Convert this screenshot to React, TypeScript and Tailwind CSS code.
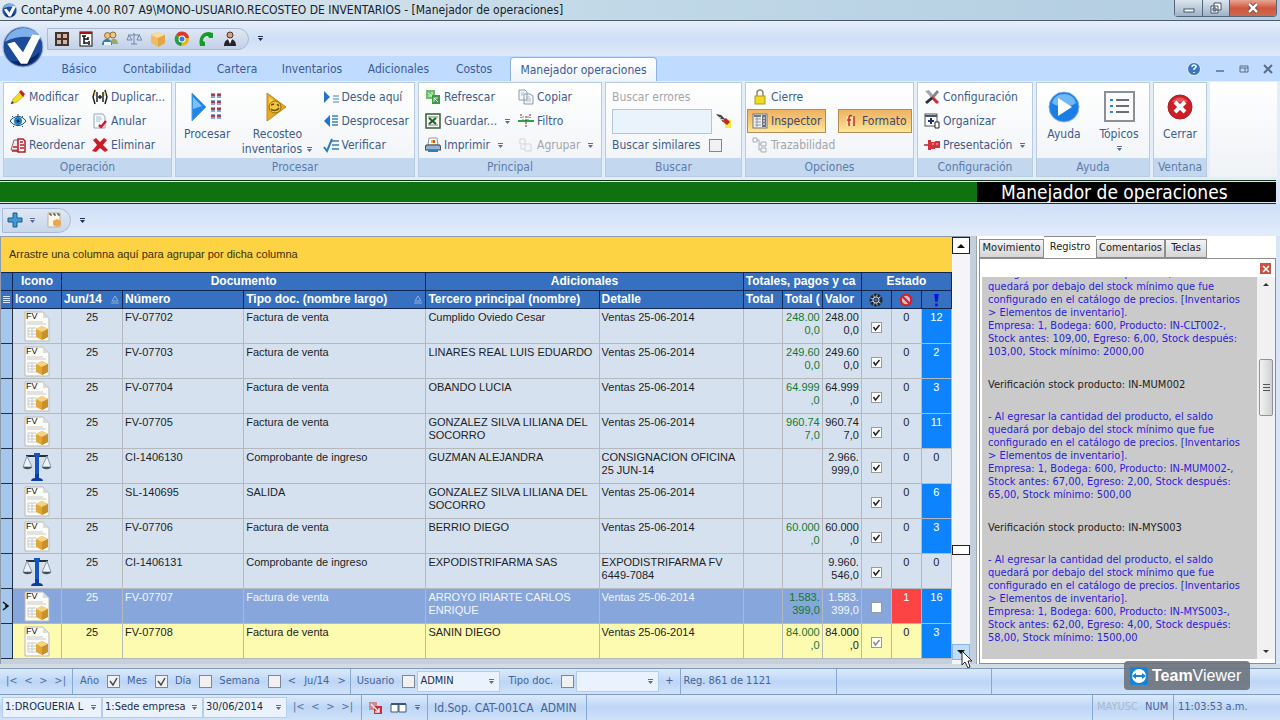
import type { ReactNode } from "react";

const sans = "font-['DejaVu_Sans_Condensed','DejaVu_Sans',sans-serif]";
const arial = "font-['Liberation_Sans',Arial,sans-serif]";

function Svg({ size = "size-4", box = 16, children }: { size?: string; box?: number; children: ReactNode }) {
  return (
    <svg className={`${size} shrink-0`} viewBox={`0 0 ${box} ${box}`} fill="none" aria-hidden="true">
      {children}
    </svg>
  );
}

function Caret({ className = "text-[#5b6f94]" }: { className?: string }) {
  return (
    <svg className={`h-[5px] w-[7px] shrink-0 ${className}`} viewBox="0 0 7 5" aria-hidden="true">
      <path d="M1 0h5v1H1zM1 2h5L3.500 5z" fill="currentColor" />
    </svg>
  );
}

const icons = {
  grid: (
    <Svg>
      <rect x="1" y="1" width="14" height="14" fill="#3c3532" />
      <path d="M3 3h4v4H3zM9 3h4v4H9zM3 9h4v4H3zM9 9h4v4H9z" fill="#d9b09a" />
    </Svg>
  ),
  tree: (
    <Svg>
      <rect x="2" y="1" width="12" height="14" fill="#fff" stroke="#111" />
      <path d="M2 1h12v2H2z" fill="#a11" />
      <path d="M4 5h4M6 5v8M6 8h4M6 12h4M10 6v3M11 10v4" stroke="#111" strokeWidth="1.500" />
    </Svg>
  ),
  people: (
    <Svg>
      <circle cx="5.500" cy="4.500" r="3" fill="#e9c27c" stroke="#8d7039" />
      <circle cx="11" cy="4" r="3" fill="#edc988" stroke="#8d7039" />
      <path d="M8 13c0-7 8-7 8 0z" fill="#9aa96c" />
      <path d="M0 14c0-8 10-8 10 0z" fill="#2f7fb8" />
      <path d="M2 14h7v-3H2z" fill="#e8f3fa" />
    </Svg>
  ),
  scaleSmall: (
    <Svg>
      <path d="M2 4h12M8 2v11M5 13h6M3 4l-2 5h5zM13 4l-2 5h5z" stroke="#6f86a8" />
    </Svg>
  ),
  box: (
    <Svg>
      <path d="M1 4l7-3 7 3v8l-7 4-7-4z" fill="#f0bb62" />
      <path d="M1 4l7 3 7-3-7-3z" fill="#f9dca4" />
      <path d="M8 7v9l7-4V4z" fill="#e2a548" />
    </Svg>
  ),
  chrome: (
    <Svg>
      <circle cx="8" cy="8" r="7" fill="#e8b621" />
      <path d="M2 4a7 7 0 0 1 13 3H8z" fill="#d93a2b" />
      <path d="M2 4a7 7 0 0 0 5 11l2-6z" fill="#2f9a46" />
      <circle cx="8" cy="8" r="3.500" fill="#fff" />
      <circle cx="8" cy="8" r="2.500" fill="#3a7bd5" />
    </Svg>
  ),
  phone: (
    <Svg>
      <path d="M2 15C0 7 4 1 11 1l4 1v5h-4l-1-2C7 5 5 7 5 10l2 1v4z" fill="#199b2c" />
    </Svg>
  ),
  person: (
    <Svg>
      <circle cx="8" cy="4" r="3" fill="#d9a184" stroke="#4a332b" />
      <path d="M2 15c0-4 2-7 6-7s6 3 6 7z" fill="#24252c" />
      <path d="M6 8h4l-2 5z" fill="#fff" />
    </Svg>
  ),
  pencil: (
    <Svg>
      <path d="M1 15l2-5 7-7 4 4-7 6z" fill="#f1dd22" stroke="#9b931f" strokeWidth=".5" />
      <path d="M9 3l2-2 4 4-2 3z" fill="#cf1f2b" />
      <path d="M1 15l1-3 2 2z" fill="#333" />
    </Svg>
  ),
  eye: (
    <Svg>
      <path d="M0 8c4-6 12-6 16 0-4 6-12 6-16 0z" fill="#e9f3fb" stroke="#27415c" />
      <circle cx="8" cy="8" r="4" fill="#1c82c8" />
      <circle cx="8" cy="8" r="1.500" fill="#0b2136" />
      <path d="M2 3l1 1M13 3l-1 1M8 1v2M3 14l1-1M13 14l-1-1" stroke="#27415c" />
    </Svg>
  ),
  reorder: (
    <Svg>
      <path d="M1 13L4 3h4v10z" fill="#f3e9ea" stroke="#8d5f66" />
      <path d="M8 2h5l2 2v11H8z" fill="#fff" stroke="#b71c26" strokeWidth="1.500" />
      <path d="M10 5h3M10 8h4M10 11h4M2 14h6M3 10h4" stroke="#b71c26" strokeWidth="1.500" />
    </Svg>
  ),
  duplicate: (
    <Svg>
      <path d="M3 1L1 8l2 7M5 3v10M13 1l2 7-2 7M11 3v10" stroke="#222" strokeWidth="1.500" />
      <path d="M6 8h4M8 6v4" stroke="#222" strokeWidth="1.500" />
      <path d="M3 3v4M13 3v4" stroke="#e3c51c" />
    </Svg>
  ),
  annul: (
    <Svg>
      <path d="M2 1h9l2 3v11H2z" fill="#f7fafc" stroke="#9aa5b1" />
      <path d="M4 4h5M4 6h6M4 8h4" stroke="#a9bfca" />
      <path d="M7 12l2 2 5-6" stroke="#cf1f2b" strokeWidth="2.500" />
    </Svg>
  ),
  remove: (
    <Svg>
      <path d="M1 3l3-2 4 4 4-4 3 2-4 5 5 5-3 2-5-4-4 4-4-1 5-6z" fill="#cb1d27" />
    </Svg>
  ),
  process: (
    <Svg size="size-8" box={32}>
      <path d="M1 2l14 14L1 30z" fill="#1f86ee" stroke="#5b9be0" />
      <path d="M2 6l9 9-9 3z" fill="#7cc0ff" />
      {[2, 9, 16, 23].map((y) => (
        <g key={y}>
          <path d={`M20 ${y}h4v5h-4zM26 ${y}h4v5h-4z`} fill="#8aa4d2" />
          <path d={`M20 ${y + 2}h4M26 ${y + 2}h4`} stroke="#b5374c" strokeWidth="2" />
        </g>
      ))}
    </Svg>
  ),
  recost: (
    <Svg size="size-8" box={32}>
      <path d="M6 2l19 14L6 30z" fill="#eba922" stroke="#b98a24" />
      <path d="M8 6l12 9-12 2z" fill="#f8cf5c" />
      <circle cx="14" cy="16" r="6" fill="#f5c73c" stroke="#94690d" />
      <path d="M10 14l3-1M16 13l2 2M10 18c2 2 6 2 8-1" stroke="#6a4c0a" strokeWidth="1.500" />
    </Svg>
  ),
  fromHere: (
    <Svg>
      <path d="M1 2l6 6-6 6z" fill="#2273cf" />
      <path d="M10 7h6M10 10h6M10 13h6" stroke="#3a84c4" />
    </Svg>
  ),
  unprocess: (
    <Svg>
      <path d="M7 2L1 8l6 6z" fill="#2273cf" />
      <path d="M9 3h6M9 6h6M9 9h6M9 12h6" stroke="#3a84c4" strokeWidth="1.500" />
    </Svg>
  ),
  verify: (
    <Svg>
      <path d="M1 10l3 4L9 2" stroke="#2480c5" strokeWidth="2" />
      <path d="M9 4h7M9 8h7M9 12h7" stroke="#3a84a4" strokeWidth="1.500" />
    </Svg>
  ),
  refresh: (
    <Svg>
      <path d="M1 1h9v9H1z" fill="#6cbd70" />
      <path d="M3 4l4 3M7 3v4H3" stroke="#e3f6e1" />
      <path d="M7 6h8v9H7z" fill="#3b9a48" />
      <path d="M9 9l4 4M9 13V9h4" stroke="#e3f6e1" />
    </Svg>
  ),
  excel: (
    <Svg>
      <rect x="1" y="1" width="14" height="14" fill="#f2f8ef" stroke="#39593c" strokeWidth="1.500" />
      <path d="M3 4h10M3 12h10" stroke="#6c8b6b" />
      <path d="M4 5l7 6M11 5l-7 6" stroke="#1f5a2b" strokeWidth="2" />
    </Svg>
  ),
  printer: (
    <Svg>
      <path d="M4 1h8l1 7H3z" fill="#fff" stroke="#8a96a5" />
      <path d="M6 3h2v3H6z" fill="#e9b33d" />
      <path d="M8 3h2v3H8z" fill="#d84a32" />
      <path d="M1 8h14l1 5H0z" fill="#9fb0c4" stroke="#33435c" />
      <path d="M3 14h10" stroke="#2680c4" strokeWidth="2" />
    </Svg>
  ),
  copy: (
    <Svg>
      <path d="M1 1h6l2 2v8H1zM6 5h6l3 2v8H6z" fill="#f5f8fb" stroke="#8d99a8" />
      <path d="M8 8h4M8 10h5M8 12h5M3 4h3M3 6h2" stroke="#b1bbc8" />
    </Svg>
  ),
  filter: (
    <Svg>
      <path d="M0 8h16" stroke="#2da344" strokeWidth="2" />
      <path d="M3 1v4M12 1v4M8 3v12" stroke="#5d3333" strokeDasharray="2 1" />
      <path d="M5 3v4M10 3v4" stroke="#b66" strokeDasharray="2 1" />
    </Svg>
  ),
  group: (
    <Svg>
      <path d="M2 2h5v5H2zM7 7h6v7H7zM3 8v4h4" stroke="#d3d6db" />
    </Svg>
  ),
  brush: (
    <Svg>
      <path d="M9 7h6v8H9z" fill="#f7ee38" />
      <path d="M0 1l5 1 5 5-3 2z" fill="#4a3e3e" />
      <path d="M6 8l4-3 4 4-3 3z" fill="#c3272b" />
      <path d="M2 4l3 1M4 6l4 1" stroke="#dedede" />
    </Svg>
  ),
  lock: (
    <Svg>
      <path d="M5 8V4a3 3 0 0 1 6 0v4" stroke="#8d8d6a" strokeWidth="1.500" />
      <rect x="3" y="7" width="10" height="8" fill="#f0dc1f" stroke="#a89b24" />
    </Svg>
  ),
  inspector: (
    <Svg>
      <rect x="1" y="1" width="14" height="14" fill="#f0f0f0" stroke="#777" />
      <path d="M2 2h7v2H2z" fill="#6f7b8b" />
      <path d="M3 6h6M3 9h6M3 12h6M5 4v10" stroke="#8e99a7" />
      <path d="M10 2h4v12h-4z" fill="#6b7380" />
      <path d="M11 5h2M11 8h2M11 11h2" stroke="#fff" />
    </Svg>
  ),
  format: (
    <Svg>
      <path d="M3 3h9v10H3z" fill="#f6d9a4" />
      <path d="M9 3c-2-1-3 0-3 2v8M4 7h4M11 3v10" stroke="#c2301c" strokeWidth="1.500" />
    </Svg>
  ),
  trace: (
    <Svg>
      <path d="M1 1h4v4H1zM9 5h5v4H9zM9 11h5v4H9zM5 3h2v10h2M7 7h2" stroke="#a9adb4" />
    </Svg>
  ),
  tools: (
    <Svg>
      <path d="M1 2l4-1 9 11-2 3L4 5z" fill="#a2a8b0" />
      <path d="M13 1l2 2-5 6-2-2z" fill="#7e858e" />
      <path d="M8 7l7 6-2 2-6-6z" fill="#c92b31" />
      <path d="M7 8l2 2-6 5-2-2z" fill="#2e3338" />
    </Svg>
  ),
  organize: (
    <Svg>
      <rect x="1" y="1" width="12" height="12" fill="#fff" stroke="#4b5563" />
      <path d="M1 3h12" stroke="#4b5563" strokeWidth="2" />
      <path d="M7 5v6M4 8h6" stroke="#1c2f80" strokeWidth="2" />
      <path d="M11 9h4v6h-4z" fill="#fff" stroke="#222" />
    </Svg>
  ),
  present: (
    <Svg>
      <path d="M0 8h5" stroke="#9a6a70" strokeWidth="2" />
      <path d="M4 3h3v10H4zM7 5h4v7H7zM11 4h5v7h-5z" fill="#d6303b" />
      <path d="M8 7h2M12 7h2" stroke="#f4c4c7" />
    </Svg>
  ),
  help: (
    <Svg size="size-8" box={32}>
      <circle cx="16" cy="16" r="15" fill="#1c7ee4" stroke="#7fb3e8" />
      <path d="M4 12c3-12 21-12 24 0-7 5-17 5-24 0z" fill="#6fb9f7" />
      <path d="M10 7l14 9-14 9z" fill="#fff" />
    </Svg>
  ),
  topics: (
    <Svg size="size-8" box={32}>
      <rect x="2" y="1" width="29" height="29" fill="#fbfbfb" stroke="#8c8f96" strokeWidth="2" />
      <path d="M7 9h3M7 15h3M7 21h3" stroke="#2f86c8" strokeWidth="2" />
      <path d="M13 9h13M13 15h13M13 21h13" stroke="#3c4048" strokeWidth="1.500" />
    </Svg>
  ),
  close: (
    <Svg size="size-8" box={32}>
      <circle cx="16" cy="16" r="12" fill="#cf1f26" stroke="#9d2227" />
      <path d="M8 11c4-6 12-6 16 0z" fill="#e5575b" />
      <path d="M11 11l10 10M21 11L11 21" stroke="#fff" strokeWidth="4" />
    </Svg>
  ),
};

type IconName = keyof typeof icons;

type ActionProps = { icon: IconName; label: string; caret?: boolean; disabled?: boolean; active?: boolean };

function Action({ icon, label, caret, disabled, active }: ActionProps) {
  return (
    <button
      type="button"
      disabled={disabled}
      className={`flex h-6 items-center gap-[3px] px-1 whitespace-nowrap ${
        active
          ? "border border-[#b08d55] bg-linear-to-b from-[#eeb363] via-[#f8c877] to-[#fde79b] text-[#3d4a68]"
          : "border border-transparent"
      } ${disabled ? "text-[#a3a6ab]" : ""}`}
    >
      {icons[icon]}
      {label}
      {caret && (
        <span className="ml-1">
          <Caret />
        </span>
      )}
    </button>
  );
}

function BigAction({ icon, lines, width, caret }: { icon: IconName; lines: string[]; width: string; caret?: boolean }) {
  return (
    <button type="button" className={`flex flex-col items-center pt-2 ${width}`}>
      {icons[icon]}
      <span className="mt-1 flex flex-col items-center leading-[15px]">
        {lines.map((line, i) => (
          <span key={line} className="flex items-center gap-1 whitespace-nowrap">
            {line}
            {caret && i > 0 && <Caret />}
          </span>
        ))}
        {caret && lines.length === 1 && (
          <span className="mt-1">
            <Caret />
          </span>
        )}
      </span>
    </button>
  );
}

function Group({ title, width, children }: { title: string; width: string; children: ReactNode }) {
  return (
    <section className={`flex shrink-0 flex-col border border-[#b9cbe2] bg-linear-to-b from-white to-[#eff2f6] ${width}`}>
      <div className="flex h-[75px] items-start">{children}</div>
      <h2 className="h-[18px] bg-[#c3d8ee] text-center leading-[18px] text-[#5e7bab]">{title}</h2>
    </section>
  );
}

function Column({ width = "", children }: { width?: string; children: ReactNode }) {
  return <div className={`flex shrink-0 flex-col items-start pt-[2px] pl-px ${width}`}>{children}</div>;
}

const tabs = [
  { label: "Básico", width: "w-[60px]" },
  { label: "Contabilidad", width: "w-[96px]" },
  { label: "Cartera", width: "w-[64px]" },
  { label: "Inventarios", width: "w-[86px]" },
  { label: "Adicionales", width: "w-[87px]" },
  { label: "Costos", width: "w-[64px]" },
];

const quickIcons: IconName[] = ["grid", "tree", "people", "scaleSmall", "box", "chrome", "phone", "person"];

function Logo({ size }: { size: string }) {
  return (
    <Svg size={size} box={40}>
      <circle cx="20" cy="20" r="19" fill="#1d4b9c" stroke="#9db4d4" />
      <path d="M3 15C8-2 32-2 37 13c-9-4-24-4-34 2z" fill="#7fb0ea" />
      <path d="M36 25A17 17 0 0 1 8 33c10 2 20-1 28-8z" fill="#0c2660" />
      <path d="M5 17l7-2 8 10 9-17 8 1-13 27h-6z" fill="#fff" />
    </Svg>
  );
}

function TitleBar() {
  return (
    <header className="flex h-[21px] items-center border-b border-[#4b5b6a] bg-linear-to-r from-[#dfe9ef] via-[#c0d8e7] to-[#b2cce1] pl-[2px]">
      <Logo size="size-[15px]" />
      <h1 className="ml-1 text-[12px] whitespace-nowrap text-[#16202b]">
        ContaPyme 4.00 R07 A9\MONO-USUARIO.RECOSTEO DE INVENTARIOS - [Manejador de operaciones]
      </h1>
      <div className="mr-[3px] ml-auto flex h-[17px] self-start rounded-b border border-t-0 border-[#54657a] text-white">
        <button type="button" aria-label="Minimizar" className="flex w-7 items-center justify-center border-r border-[#54657a] bg-linear-to-b from-[#dbe5ee] to-[#9fb3c7]">
          <Svg size="size-3" box={12}>
            <rect x="1" y="7" width="10" height="3" fill="#fff" stroke="#465468" />
          </Svg>
        </button>
        <button type="button" aria-label="Restaurar" className="flex w-[27px] items-center justify-center border-r border-[#54657a] bg-linear-to-b from-[#dbe5ee] to-[#9fb3c7]">
          <Svg size="size-3" box={12}>
            <path d="M4 1h7v7H4zM1 4h7v7H1z" fill="#fff" stroke="#465468" />
            <path d="M3 6h3v3H3z" stroke="#465468" />
          </Svg>
        </button>
        <button type="button" aria-label="Cerrar" className="flex w-[46px] items-center justify-center bg-linear-to-b from-[#e6a696] via-[#d0553d] to-[#cc6a50]">
          <Svg size="size-3" box={12}>
            <path d="M2 2l8 8M10 2l-8 8" stroke="#5a3a3a" strokeWidth="4" />
            <path d="M2 2l8 8M10 2l-8 8" stroke="#fff" strokeWidth="2.500" />
          </Svg>
        </button>
      </div>
    </header>
  );
}

function QuickAccess() {
  return (
    <div className="relative flex h-[35px] items-center bg-linear-to-b from-[#e6eefb] via-[#cfdff6] to-[#dfe9f9] pl-[47px]">
      <div className="absolute top-[5px] left-[2px] z-10">
        <Logo size="size-[42px]" />
      </div>
      <div className="flex h-[22px] items-center gap-2 rounded-r-full border border-[#a9bbd6] bg-linear-to-b from-[#dfe7f3] to-[#c3d1e7] pr-2.5 pl-1.5">
        {quickIcons.map((name) => (
          <button type="button" key={name} aria-label={name}>
            {icons[name]}
          </button>
        ))}
      </div>
      <span className="ml-2">
        <Caret className="text-[#1f2f4d]" />
      </span>
    </div>
  );
}

function Tabs() {
  return (
    <nav className="flex h-[25px] items-end bg-[#bfdbff] pl-[49px] text-[12px] text-[#3d5c96]">
      {tabs.map((tab) => (
        <button type="button" key={tab.label} className={`h-6 ${tab.width}`}>
          {tab.label}
        </button>
      ))}
      <button type="button" className="ml-1 h-6 w-[147px] rounded-t-sm border border-b-0 border-[#8fb1de] bg-linear-to-b from-white to-[#eef4fc]">
        Manejador operaciones
      </button>
      <div className="mr-1.5 ml-auto flex h-6 items-center gap-3 text-[#5c6d88]">
        <button type="button" aria-label="Ayuda">
          <Svg>
            <circle cx="8" cy="8" r="6.500" fill="#3b77c0" stroke="#e6f0fb" />
            <path d="M6 6c0-3 5-2 4 0l-2 2v1M8 11v1" stroke="#fff" strokeWidth="1.500" />
          </Svg>
        </button>
        <button type="button" aria-label="Minimizar">
          <Svg size="size-3" box={12}>
            <path d="M2 8h8" stroke="currentColor" strokeWidth="1.500" />
          </Svg>
        </button>
        <button type="button" aria-label="Restaurar">
          <Svg size="size-3" box={12}>
            <path d="M2 3h8v6H2zM2 5h8M7 5v4" stroke="currentColor" />
          </Svg>
        </button>
        <button type="button" aria-label="Cerrar">
          <Svg size="size-3" box={12}>
            <path d="M2 2l8 8M10 2l-8 8" stroke="currentColor" strokeWidth="2" />
          </Svg>
        </button>
      </div>
    </nav>
  );
}

function Ribbon() {
  return (
    <div className="flex h-[99px] gap-[3px] bg-[#e4eefa] px-[3px] pt-px pb-[3px] text-[12px] text-[#3d5c8d]">
      <Group title="Operación" width="w-[169px]">
        <Column width="w-[82px]">
          <Action icon="pencil" label="Modificar" />
          <Action icon="eye" label="Visualizar" />
          <Action icon="reorder" label="Reordenar" />
        </Column>
        <Column>
          <Action icon="duplicate" label="Duplicar..." />
          <Action icon="annul" label="Anular" />
          <Action icon="remove" label="Eliminar" />
        </Column>
      </Group>
      <Group title="Procesar" width="w-[240px]">
        <BigAction icon="process" lines={["Procesar"]} width="w-[64px]" />
        <BigAction icon="recost" lines={["Recosteo", "inventarios"]} width="w-[80px]" caret />
        <Column>
          <Action icon="fromHere" label="Desde aquí" />
          <Action icon="unprocess" label="Desprocesar" />
          <Action icon="verify" label="Verificar" />
        </Column>
      </Group>
      <Group title="Principal" width="w-[184px]">
        <Column width="w-[93px]">
          <Action icon="refresh" label="Refrescar" />
          <Action icon="excel" label="Guardar..." caret />
          <Action icon="printer" label="Imprimir" caret />
        </Column>
        <Column>
          <Action icon="copy" label="Copiar" />
          <Action icon="filter" label="Filtro" />
          <Action icon="group" label="Agrupar" caret disabled />
        </Column>
      </Group>
      <Group title="Buscar" width="w-[137px]">
        <div className="flex w-full flex-col px-1.5 pt-[2px]">
          <label htmlFor="errors" className="h-6 leading-6 text-[#a3a6ab]">
            Buscar errores
          </label>
          <div className="flex h-6 items-center gap-1">
            <input id="errors" className="h-[25px] w-[100px] border border-[#b4c4d9] bg-[#eaf2fb]" />
            {icons.brush}
          </div>
          <label className="flex h-6 items-center gap-2 whitespace-nowrap">
            Buscar similares
            <Check />
          </label>
        </div>
      </Group>
      <Group title="Opciones" width="w-[169px]">
        <Column width="w-[92px]">
          <Action icon="lock" label="Cierre" />
          <Action icon="inspector" label="Inspector" active />
          <Action icon="trace" label="Trazabilidad" disabled />
        </Column>
        <div className="pt-[26px]">
          <Action icon="format" label="Formato" active />
        </div>
      </Group>
      <Group title="Configuración" width="w-[116px]">
        <Column>
          <Action icon="tools" label="Configuración" />
          <Action icon="organize" label="Organizar" />
          <Action icon="present" label="Presentación" caret />
        </Column>
      </Group>
      <Group title="Ayuda" width="w-[114px]">
        <BigAction icon="help" lines={["Ayuda"]} width="w-[54px]" />
        <BigAction icon="topics" lines={["Tópicos"]} width="w-[56px]" caret />
      </Group>
      <Group title="Ventana" width="w-[54px]">
        <BigAction icon="close" lines={["Cerrar"]} width="w-[52px]" />
      </Group>
      <div className="flex-1 bg-linear-to-b from-white to-[#eff2f6]" />
    </div>
  );
}

// Must sit inside a <label>
function Check({ checked = false }: { checked?: boolean }) {
  return (
    <span className="relative flex size-[13px] shrink-0 items-center justify-center">
      <input type="checkbox" defaultChecked={checked} className="size-[13px] appearance-none border border-[#7d8896] bg-[#f1f1f1]" />
      {checked && (
        <svg className="pointer-events-none absolute size-[9px] text-[#3c4a63]" viewBox="0 0 9 9" fill="none">
          <path d="M1 4l3 4L8 1" stroke="currentColor" strokeWidth="1.500" />
        </svg>
      )}
    </span>
  );
}

function CheckMark({ checked, dim }: { checked: boolean; dim?: boolean }) {
  return (
    <label className="relative mx-auto flex size-[11px] items-center justify-center">
      <input type="checkbox" defaultChecked={checked} aria-label="Procesado" className="size-[11px] appearance-none border border-[#9a9a9a] bg-white" />
      {checked && (
        <svg className={`pointer-events-none absolute size-[9px] ${dim ? "text-[#8c8c7a]" : "text-[#222]"}`} viewBox="0 0 9 9" fill="none">
          <path d="M1.500 4l2 3L7.500 2" stroke="currentColor" strokeWidth="1.500" />
        </svg>
      )}
    </label>
  );
}

type Row = {
  kind: "doc" | "scale";
  number: string;
  type: string;
  name: string;
  detail: string;
  paid: string[];
  value: string[];
  errors: number;
  warnings: number;
};

const sale = { kind: "doc" as const, type: "Factura de venta", detail: "Ventas 25-06-2014", errors: 0 };

const rows: Row[] = [
  { ...sale, number: "FV-07702", name: "Cumplido Oviedo Cesar", paid: ["248.00", "0,0"], value: ["248.00", "0,0"], warnings: 12 },
  { ...sale, number: "FV-07703", name: "LINARES REAL LUIS EDUARDO", paid: ["249.60", "0,0"], value: ["249.60", "0,0"], warnings: 2 },
  { ...sale, number: "FV-07704", name: "OBANDO LUCIA", paid: ["64.999", ",0"], value: ["64.999", ",0"], warnings: 3 },
  { ...sale, number: "FV-07705", name: "GONZALEZ SILVA LILIANA DEL SOCORRO", paid: ["960.74", "7,0"], value: ["960.74", "7,0"], warnings: 11 },
  { kind: "scale", number: "CI-1406130", type: "Comprobante de ingreso", name: "GUZMAN ALEJANDRA", detail: "CONSIGNACION OFICINA 25 JUN-14", paid: [], value: ["2.966.", "999,0"], errors: 0, warnings: 0 },
  { ...sale, number: "SL-140695", type: "SALIDA", name: "GONZALEZ SILVA LILIANA DEL SOCORRO", paid: [], value: [], warnings: 6 },
  { ...sale, number: "FV-07706", name: "BERRIO DIEGO", paid: ["60.000", ",0"], value: ["60.000", ",0"], warnings: 3 },
  { kind: "scale", number: "CI-1406131", type: "Comprobante de ingreso", name: "EXPODISTRIFARMA SAS", detail: "EXPODISTRIFARMA FV 6449-7084", paid: [], value: ["9.960.", "546,0"], errors: 0, warnings: 0 },
  { ...sale, number: "FV-07707", name: "ARROYO IRIARTE CARLOS ENRIQUE", paid: ["1.583.", "399,0"], value: ["1.583.", "399,0"], errors: 1, warnings: 16 },
  { ...sale, number: "FV-07708", name: "SANIN DIEGO", paid: ["84.000", ",0"], value: ["84.000", ",0"], warnings: 3 },
];

function DocIcon() {
  return (
    <svg className="mx-auto h-[31px] w-[26px]" viewBox="0 0 26 31" aria-label="FV">
      <path d="M1 1h18l6 6v23H1z" fill="#fbfbf8" stroke="#b9b9b0" />
      <path d="M19 1v6h6z" fill="#d9dcdc" />
      <text x="2" y="8" fontSize="9" fontFamily="Liberation Sans, Arial, sans-serif" fill="#111">
        FV
      </text>
      <path d="M3 11h16M3 13h19M4 17h8M4 20h8M4 23h8M4 26h8M4 17v9M8 17v9" stroke="#c8cbca" />
      <path d="M12 18l6-3 6 3v8l-6 3-6-3z" fill="#e0a83a" />
      <path d="M12 18l6 3 6-3-6-3z" fill="#f5d381" />
      <path d="M18 21v8l6-3v-8z" fill="#cb8f27" />
    </svg>
  );
}

function ScaleIcon() {
  return (
    <svg className="mx-auto h-[31px] w-[30px]" viewBox="0 0 30 31" fill="none" aria-label="CI">
      <path d="M4 5h22" stroke="#26303c" strokeWidth="2" />
      <path d="M5 5L1 16h9zM25 5l-5 11h9z" fill="#eef3f8" stroke="#8d98a6" />
      <path d="M1 16c1 3 8 3 9 0zM20 16c1 3 8 3 9 0z" fill="#46505c" />
      <path d="M12 2h6v3h-1v19h-4V5h-1z" fill="#1057c4" />
      <path d="M9 30c0-2 2-3 4-3v-4h4v4c2 0 4 1 4 3z" fill="#0b3fa0" />
    </svg>
  );
}

const columns = ["w-[12px]", "w-[49px]", "w-[61px]", "w-[121px]", "w-[182px]", "w-[173px]", "w-[144px]", "w-[39px]", "w-[40px]", "w-[39px]", "w-[30px]", "w-[30px]", "w-[30px]"];

const headers = ["Icono", "Jun/14", "Número", "Tipo doc. (nombre largo)", "Tercero principal (nombre)", "Detalle", "Total", "Total (", "Valor"];

const head = "overflow-hidden border-r border-b border-[#10254f] px-[2px] whitespace-nowrap";
const cell = "overflow-hidden border-r border-b border-[#b5b9bd] px-[2px] pt-[2px]";

function Grid() {
  return (
    <table className="w-full table-fixed border-separate border-spacing-0 text-left text-[11px] leading-[13px]">
      <colgroup>
        {columns.map((width, i) => (
          <col key={i} className={width} />
        ))}
      </colgroup>
      <thead className="bg-[#3670c0] text-[12px] text-white">
        <tr className="h-[18px] text-center">
          <th className={head} />
          <th className={head}>Icono</th>
          <th colSpan={3} className={head}>Documento</th>
          <th colSpan={2} className={head}>Adicionales</th>
          <th colSpan={3} className={`${head} text-left`}>Totales, pagos y ca</th>
          <th colSpan={3} className={head}>Estado</th>
        </tr>
        <tr className="h-[18px]">
          <th className={head}>
            <Svg size="size-[7px]" box={7}>
              <path d="M0 0h7v1H0zM0 2h7v1H0zM0 4h7v1H0zM0 6h7v1H0z" fill="#dce7f6" />
            </Svg>
          </th>
          {headers.map((label) => (
            <th key={label} className={head}>
              <span className="flex items-center justify-between">
                {label}
                {(label === "Jun/14" || label.startsWith("Tipo")) && (
                  <Svg size="size-2.5" box={10}>
                    <path d="M5 1l3 5H2zM1 8h8" stroke="#8fb0df" />
                  </Svg>
                )}
              </span>
            </th>
          ))}
          <th className={head} aria-label="Procesado">
            <Svg size="mx-auto size-4">
              <circle cx="8" cy="8" r="5" fill="#c9cdd2" stroke="#23272c" strokeWidth="3" strokeDasharray="2.500 1" />
              <circle cx="8" cy="8" r="2" fill="#3670c0" stroke="#23272c" />
            </Svg>
          </th>
          <th className={head} aria-label="Errores">
            <Svg size="mx-auto size-3.5">
              <circle cx="8" cy="8" r="6" fill="#d9bcc6" stroke="#d3202a" strokeWidth="2.500" />
              <path d="M4 4l8 8" stroke="#d3202a" strokeWidth="2.500" />
            </Svg>
          </th>
          <th className={head} aria-label="Advertencias">
            <Svg size="mx-auto size-3.5">
              <path d="M6 1h5l-1 9H7zM7 12h3v3H7z" fill="#0a12e0" />
            </Svg>
          </th>
        </tr>
      </thead>
      <tbody>
        {rows.map((row) => {
          const selected = row.number === "FV-07707";
          const last = row.number === "FV-07708";
          return (
            <tr
              key={row.number}
              className={`h-[35px] align-top ${selected ? "bg-[#87a6dc] text-[#f2f6fd]" : last ? "bg-[#fdfbb0] text-[#222]" : "bg-[#d6e1f0] text-[#1a1f26]"}`}
            >
              <td className="border-r border-b border-[#1f2d45] bg-[#a6c7ec] align-middle text-[#111]">
                {selected && (
                  <Svg size="size-2.5" box={10}>
                    <path d="M2 1l5 4-5 4M4 5h3" stroke="currentColor" strokeWidth="1.500" />
                  </Svg>
                )}
              </td>
              <td className={cell}>{row.kind === "doc" ? <DocIcon /> : <ScaleIcon />}</td>
              <td className={`${cell} text-center`}>25</td>
              <td className={cell}>{row.number}</td>
              <td className={cell}>{row.type}</td>
              <td className={cell}>{row.name}</td>
              <td className={cell}>{row.detail}</td>
              <td className={cell} />
              <td className={`${cell} text-right text-[#127a2e]`}>
                {row.paid.map((part) => <div key={part}>{part}</div>)}
              </td>
              <td className={`${cell} text-right`}>
                {row.value.map((part) => <div key={part}>{part}</div>)}
              </td>
              <td className={`${cell} align-middle`}>
                <CheckMark checked={!selected} dim={last} />
              </td>
              <td className={`${cell} text-center ${row.errors ? "bg-[#fd4444] text-white" : ""}`}>{row.errors}</td>
              <td className={`${cell} text-center ${row.warnings ? "bg-[#0d84fd] text-white" : ""}`}>{row.warnings}</td>
            </tr>
          );
        })}
      </tbody>
    </table>
  );
}

function GridScrollbar() {
  return (
    <div className="flex w-[18px] shrink-0 flex-col bg-[#f4f5f7]">
      <button type="button" aria-label="Subir" className="flex h-[17px] items-center justify-center border border-[#222] bg-white">
        <svg className="h-1 w-2" viewBox="0 0 8 4">
          <path d="M4 0l4 4H0z" fill="#111" />
        </svg>
      </button>
      <div className="flex flex-1 flex-col justify-end">
        <div className="mb-[89px] h-2.5 border border-[#222] bg-white" />
      </div>
      <button type="button" aria-label="Bajar" className="relative mb-1 flex h-4 items-center justify-center border border-[#8fb4da] bg-[#bcdcf8]">
        <svg className="h-1 w-2" viewBox="0 0 8 4">
          <path d="M4 4l4-4H0z" fill="#111" />
        </svg>
        <svg className="absolute top-[5px] left-2 h-[19px] w-[12px]" viewBox="0 0 12 19">
          <path d="M1 1v14l3-3 3 6 2-1-2-6h4z" fill="#fff" stroke="#222" />
        </svg>
      </button>
    </div>
  );
}

const log = [
  {
    title: "Verificación stock producto: IN-CLT002",
    body: `- Al egresar la cantidad del producto, el saldo
quedará por debajo del stock mínimo que fue
configurado en el catálogo de precios. [Inventarios
> Elementos de inventario].
Empresa: 1, Bodega: 600, Producto: IN-CLT002-,
Stock antes: 109,00, Egreso: 6,00, Stock después:
103,00, Stock mínimo: 2000,00`,
  },
  {
    title: "Verificación stock producto: IN-MUM002",
    body: `- Al egresar la cantidad del producto, el saldo
quedará por debajo del stock mínimo que fue
configurado en el catálogo de precios. [Inventarios
> Elementos de inventario].
Empresa: 1, Bodega: 600, Producto: IN-MUM002-,
Stock antes: 67,00, Egreso: 2,00, Stock después:
65,00, Stock mínimo: 500,00`,
  },
  {
    title: "Verificación stock producto: IN-MYS003",
    body: `- Al egresar la cantidad del producto, el saldo
quedará por debajo del stock mínimo que fue
configurado en el catálogo de precios. [Inventarios
> Elementos de inventario].
Empresa: 1, Bodega: 600, Producto: IN-MYS003-,
Stock antes: 62,00, Egreso: 4,00, Stock después:
58,00, Stock mínimo: 1500,00`,
  },
];

const tabStyle = "border border-[#8d8d8d] bg-linear-to-b from-[#f4f4f4] to-[#d5d5d5]";

function Inspector() {
  return (
    <aside className="flex w-[300px] shrink-0 flex-col border-l border-[#9aa4b2] bg-white pl-[2px]">
      <div className="flex h-[22px] items-end text-[11px] text-[#222]">
        <button type="button" className={`h-[19px] w-[65px] ${tabStyle}`}>Movimiento</button>
        <button type="button" className="h-[22px] w-[52px] border-t border-[#8d8d8d] bg-white">Registro</button>
        <button type="button" className={`h-[19px] w-[69px] ${tabStyle}`}>Comentarios</button>
        <button type="button" className={`h-[19px] w-[42px] ${tabStyle}`}>Teclas</button>
      </div>
      <div className="flex min-h-0 flex-1 flex-col border border-[#8d8d8d]">
        <button type="button" aria-label="Cerrar panel" className="mt-1 mr-1 mb-[3px] flex size-[11px] items-center justify-center self-end bg-[#c9523e]">
          <Svg size="size-2" box={8}>
            <path d="M1 1l6 6M7 1L1 7" stroke="#fff" strokeWidth="1.500" />
          </Svg>
        </button>
        <div className="mb-1 ml-[2px] flex h-0 flex-1">
          <div className="flex-1 overflow-hidden bg-[#cacaca] pl-1.5 text-[11px] leading-[13px]">
            <div className="-mt-2.5">
              {log.map((entry, i) => (
                <section key={entry.title}>
                  {i > 0 && <h3 className="pt-5 pb-[19px] text-[#222]">{entry.title}</h3>}
                  <p className="whitespace-pre text-[#2a20dc]">{entry.body}</p>
                </section>
              ))}
            </div>
          </div>
          <div className="flex w-[18px] flex-col items-center bg-[#f1f1f1] py-[6px]">
            <svg className="h-[3px] w-[6px]" viewBox="0 0 6 3">
              <path d="M3 0l3 3H0z" fill="#333" />
            </svg>
            <div className="mt-[73px] flex h-[57px] w-[14px] flex-col items-center justify-center gap-[2px] rounded-xs border border-[#8e9298] bg-linear-to-r from-[#f3f3f3] to-[#cfd0d3]">
              <span className="h-px w-[7px] bg-[#555]" />
              <span className="h-px w-[7px] bg-[#555]" />
              <span className="h-px w-[7px] bg-[#555]" />
            </div>
            <svg className="mt-auto h-[3px] w-[6px]" viewBox="0 0 6 3">
              <path d="M3 3l3-3H0z" fill="#333" />
            </svg>
          </div>
        </div>
      </div>
    </aside>
  );
}

function Nav() {
  return (
    <div className="flex w-[60px] items-center justify-between text-[#53719f]">
      <button type="button">|&lt;</button>
      <button type="button">&lt;</button>
      <button type="button">&gt;</button>
      <button type="button">&gt;|</button>
    </div>
  );
}

function Select({ label, value, width }: { label: string; value: string; width: string }) {
  return (
    <div className={`flex h-[21px] items-center border border-[#b3cdec] bg-[#eaf3fd] pr-1 pl-[2px] text-[#1d2c46] ${width}`}>
      <select aria-label={label} className="min-w-0 flex-1 appearance-none overflow-hidden">
        <option>{value}</option>
      </select>
      <Caret />
    </div>
  );
}

function Sep() {
  return <span className="w-px self-stretch bg-[#86a7d2]" />;
}

const bar = "flex h-[26px] items-center border-t border-[#7c9cc6] bg-linear-to-b from-[#dceafb] via-[#bdd6f6] to-[#d0e2f9] whitespace-nowrap";
const option = "flex items-center gap-2";

function StatusBars() {
  return (
    <footer className="relative text-[11px] text-[#46649a]">
      <div className={`${bar} pl-1.5`}>
        <Nav />
        <div className="ml-1.5 flex items-center gap-[7px] self-stretch">
          <Sep />
          <label className={option}>Año <Check checked /></label>
          <label className={option}>Mes <Check checked /></label>
          <label className={option}>Día <Check /></label>
          <label className={option}>Semana <Check /></label>
        </div>
        <div className="ml-[7px] flex w-[58px] items-center justify-between">
          <button type="button">&lt;</button>
          Ju/14
          <button type="button">&gt;</button>
        </div>
        <div className="ml-1 flex items-center gap-1.5 self-stretch">
          <Sep />
          <label className={option}>Usuario <Check /></label>
        </div>
        <Select label="Usuario" value="ADMIN" width="w-[83px] ml-[2px]" />
        <label className={`${option} ml-2`}>Tipo doc. <Check /></label>
        <Select label="Tipo de documento" value="" width="w-[83px] ml-[2px]" />
        <button type="button" className="px-1.5">+</button>
        <div className="flex flex-1 items-center self-stretch">
          <Sep />
          <span className="w-[155px] pl-[3px]">Reg. 861 de 1121</span>
          <Sep />
          <span className="w-[154px]" />
          <Sep />
        </div>
      </div>
      <div className={`${bar} pl-[2px]`}>
        <Select label="Empresa" value="1:DROGUERIA L" width="w-[100px]" />
        <Select label="Sede" value="1:Sede empresa" width="w-[101px]" />
        <Select label="Fecha" value="30/06/2014" width="w-[84px]" />
        <div className="ml-1.5">
          <Nav />
        </div>
        <div className="ml-2 flex items-center gap-1.5 self-stretch">
          <Sep />
          <button type="button" aria-label="Relacionar">
            <Svg size="size-4">
              <path d="M1 2h8v8H1z" fill="#c98a93" />
              <path d="M6 6h8v8H6z" fill="#c0313a" />
              <path d="M3 4l8 8M11 8v4H7" stroke="#f8e4e6" strokeWidth="1.500" />
            </Svg>
          </button>
          <button type="button" aria-label="Ventanas">
            <Svg size="size-[18px]" box={18}>
              <path d="M1 5h7v8H1zM9 5h7v8H9z" fill="#fff" stroke="#3d5673" />
              <path d="M1 5h15" stroke="#3d5673" strokeWidth="2" />
            </Svg>
          </button>
          <Caret />
          <Sep />
          <span className="w-[146px] text-[12px] whitespace-pre">Id.Sop. CAT-001CA  ADMIN</span>
          <Sep />
        </div>
        <div className="ml-auto flex items-center self-stretch">
          <Sep />
          <span className="w-[52px] pl-1 text-[#a9b8cc]">MAYUSC</span>
          <span className="w-[28px]">NUM</span>
          <Sep />
          <span className="w-[106px] pl-1">11:03:53 a.m.</span>
        </div>
      </div>
      <div className="absolute right-[30px] bottom-[30px] flex h-[29px] w-[126px] items-center gap-1 rounded-sm bg-[#6b727c]/90 pl-1.5 text-white">
        <Svg size="size-[18px]" box={18}>
          <rect width="18" height="18" rx="2" fill="#1483d8" />
          <circle cx="9" cy="9" r="7" fill="#fff" />
          <path d="M2 9l4-3v2h6V6l4 3-4 3v-2H6v2z" fill="#1483d8" />
        </Svg>
        <span className={`text-[16px] ${arial}`}>
          <b>Team</b>Viewer
        </span>
      </div>
    </footer>
  );
}

export default function App() {
  return (
    <div className={`flex min-h-screen flex-col overflow-hidden bg-[#d8e5f8] ${sans}`}>
      <TitleBar />
      <QuickAccess />
      <Tabs />
      <Ribbon />
      <div className="mr-1 border-y border-[#12351a]">
        <div className="flex h-[22px] border-y border-[#dfe9e4] bg-[#0d720f]">
          <div className="ml-auto w-[299px] bg-black pl-6 text-[19px] leading-5 whitespace-nowrap text-white">
            Manejador de operaciones
          </div>
        </div>
      </div>
      <div className="flex h-8 items-center bg-linear-to-b from-[#cfdff7] to-[#e2ecfb] pl-[2px]">
        <div className="flex h-[25px] items-center gap-1.5 rounded-r-full border border-[#a9bbd6] bg-linear-to-b from-[#dfe7f3] to-[#c9d7eb] pr-2 pl-1">
          <button type="button" aria-label="Nuevo">
            <Svg>
              <path d="M6 1h4v5h5v4h-5v5H6v-5H1V6h5z" fill="#3d9bd8" stroke="#1d5c8f" />
            </Svg>
          </button>
          <Caret />
          <button type="button" aria-label="Documento" className="ml-1">
            <Svg>
              <path d="M2 1h12v14H2z" fill="#fbf6ea" stroke="#b9b3a5" />
              <path d="M3 2h2v2M7 2h2v2M11 2h2v2" stroke="#333" />
              <path d="M7 9l4-2 4 2v4l-4 2-4-2z" fill="#e7a94e" />
            </Svg>
          </button>
        </div>
        <span className="ml-2">
          <Caret className="text-[#1f2f4d]" />
        </span>
      </div>
      <main className="mr-1 flex flex-1 bg-[#c6d0dd]">
        <div className={`flex min-w-0 flex-1 border-t border-l border-[#8f9bab] ${arial}`}>
          <div className="min-w-0 flex-1">
            <div className="flex h-9 items-center border-b border-[#10254f] bg-[#fed343] pl-2 text-[11px] text-[#3a2f0c]">
              Arrastre una columna aquí para agrupar por dicha columna
            </div>
            <Grid />
          </div>
          <GridScrollbar />
        </div>
        <div className="w-1.5 shrink-0 bg-[#c3cfdd]" />
        <Inspector />
      </main>
      <div className="h-1 bg-[#d5dbe3]" />
      <StatusBars />
    </div>
  );
}
